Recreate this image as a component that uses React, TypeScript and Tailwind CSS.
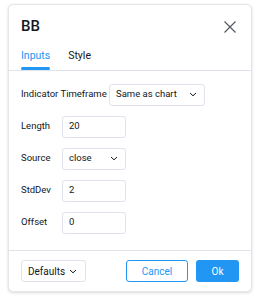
const rows = [
  { label: "Length", value: "20", select: false },
  { label: "Source", value: "close", select: true },
  { label: "StdDev", value: "2", select: false },
  { label: "Offset", value: "0", select: false },
];

function Chevron() {
  return (
    <svg width="8" height="5" viewBox="0 0 8 5" fill="none" className="text-[#131722]">
      <path d="M1 1l3 2.8L7 1" stroke="currentColor" strokeWidth="1" />
    </svg>
  );
}

export default function App() {
  return (
    <div className="h-[300px] w-[260px] bg-white pl-[8px] pt-[4px] font-['Roboto',sans-serif] text-[#131722]">
      <div className="flex h-[288px] w-[244px] flex-col rounded-[5px] border border-[#e6e6e6] bg-white shadow-[0_1px_3px_rgba(0,0,0,0.15)]">
        <div className="flex h-[43px] items-center justify-between pl-[12px] pr-[15px]">
          <span className="text-[15px] font-medium leading-none">BB</span>
          <svg width="12" height="12" viewBox="0 0 12 12">
            <path d="M0.5 0.5l11 11M11.5 0.5l-11 11" stroke="#50535e" strokeWidth="1.1" />
          </svg>
        </div>
        <div className="flex gap-[18px] border-b border-[#e0e3eb] pl-[12px] pt-[1px] text-[10.5px]">
          <div className="flex flex-col">
            <span className="pb-[4px] leading-[14px] text-[#2196f3]">Inputs</span>
            <div className="h-[2.5px] rounded-full bg-[#2196f3]" />
          </div>
          <span className="leading-[14px] text-[#131722]">Style</span>
        </div>
        <div className="flex flex-col gap-[10px] pl-[12px] pt-[13px] text-[9.5px]">
          <div className="flex items-center">
            <span className="w-[88px] whitespace-nowrap">Indicator Timeframe</span>
            <div className="flex h-[22px] w-[96px] items-center justify-between rounded-[3px] border border-[#e0e3eb] pl-[6px] pr-[7px]">
              <span>Same as chart</span>
              <Chevron />
            </div>
          </div>
          {rows.map((r) => (
            <div key={r.label} className="flex items-center">
              <span className="w-[41px]">{r.label}</span>
              <div className="flex h-[22px] w-[64px] items-center justify-between rounded-[3px] border border-[#e0e3eb] pl-[6px] pr-[7px]">
                <span>{r.value}</span>
                {r.select && <Chevron />}
              </div>
            </div>
          ))}
        </div>
        <div className="mt-auto flex h-[41px] items-center justify-between border-t border-[#e0e3eb] pl-[12px] pr-[12px]">
          <div className="flex h-[22px] w-[65px] items-center justify-between rounded-[3px] border border-[#e0e3eb] pl-[6px] pr-[8px] text-[10px]">
            <span>Defaults</span>
            <Chevron />
          </div>
          <div className="flex gap-[8px] text-[10px]">
            <div className="flex h-[22px] w-[62px] items-center justify-center rounded-[3px] border border-[#2196f3] text-[#2196f3]">
              Cancel
            </div>
            <div className="flex h-[22px] w-[43px] items-center justify-center rounded-[3px] bg-[#2196f3] text-white">
              Ok
            </div>
          </div>
        </div>
      </div>
    </div>
  );
}
